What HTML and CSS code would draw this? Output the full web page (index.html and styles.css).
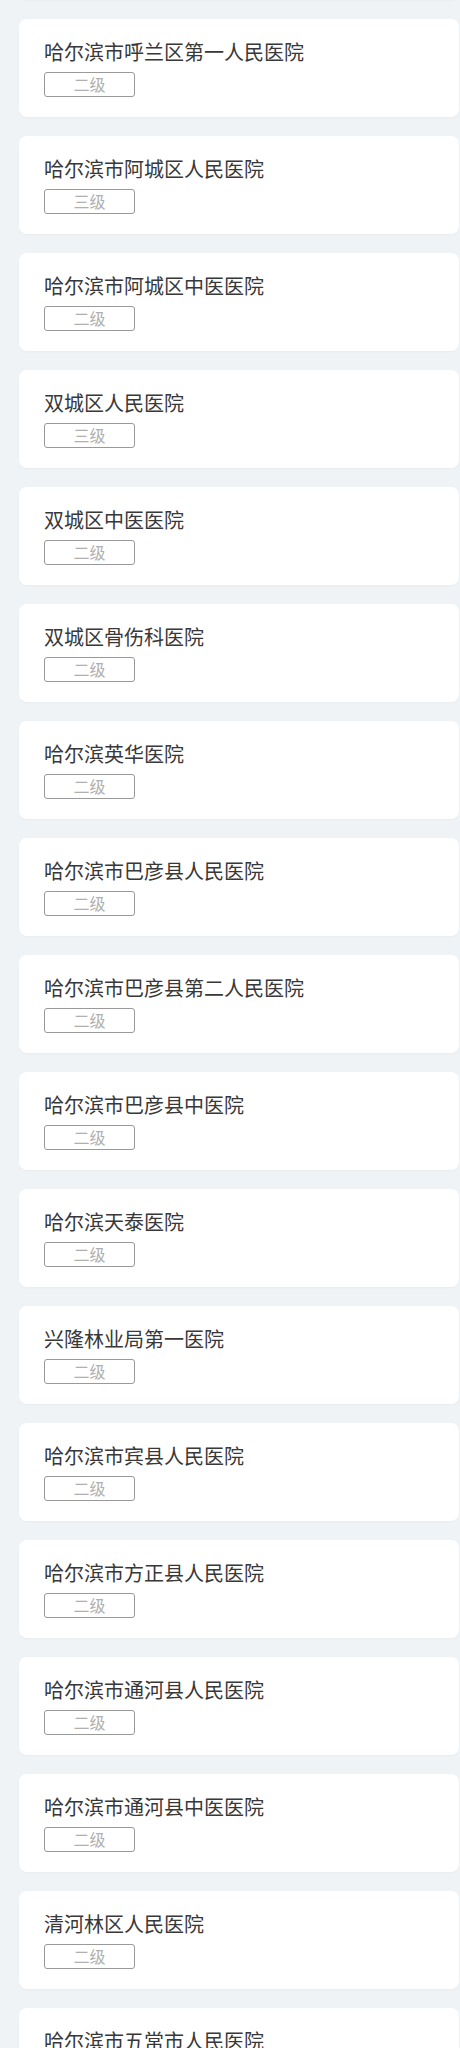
FILE: index.html
```html
<!DOCTYPE html>
<html lang="zh-CN">
<head>
<meta charset="utf-8">
<title>医院列表</title>
<link rel="stylesheet" href="styles.css">
</head>
<body>
<div class="list">
  <div class="card card-prev" aria-hidden="true"></div>
  <div class="card"><div class="name">哈尔滨市呼兰区第一人民医院</div><div class="level">二级</div></div>
  <div class="card"><div class="name">哈尔滨市阿城区人民医院</div><div class="level">三级</div></div>
  <div class="card"><div class="name">哈尔滨市阿城区中医医院</div><div class="level">二级</div></div>
  <div class="card"><div class="name">双城区人民医院</div><div class="level">三级</div></div>
  <div class="card"><div class="name">双城区中医医院</div><div class="level">二级</div></div>
  <div class="card"><div class="name">双城区骨伤科医院</div><div class="level">二级</div></div>
  <div class="card"><div class="name">哈尔滨英华医院</div><div class="level">二级</div></div>
  <div class="card"><div class="name">哈尔滨市巴彦县人民医院</div><div class="level">二级</div></div>
  <div class="card"><div class="name">哈尔滨市巴彦县第二人民医院</div><div class="level">二级</div></div>
  <div class="card"><div class="name">哈尔滨市巴彦县中医院</div><div class="level">二级</div></div>
  <div class="card"><div class="name">哈尔滨天泰医院</div><div class="level">二级</div></div>
  <div class="card"><div class="name">兴隆林业局第一医院</div><div class="level">二级</div></div>
  <div class="card"><div class="name">哈尔滨市宾县人民医院</div><div class="level">二级</div></div>
  <div class="card"><div class="name">哈尔滨市方正县人民医院</div><div class="level">二级</div></div>
  <div class="card"><div class="name">哈尔滨市通河县人民医院</div><div class="level">二级</div></div>
  <div class="card"><div class="name">哈尔滨市通河县中医医院</div><div class="level">二级</div></div>
  <div class="card"><div class="name">清河林区人民医院</div><div class="level">二级</div></div>
  <div class="card"><div class="name">哈尔滨市五常市人民医院</div><div class="level">二级</div></div>
</div>
</body>
</html>
```
FILE: styles.css
```css
html, body {
  margin: 0;
  padding: 0;
  background: #f0f3f6;
}
body {
  font-family: "Noto Sans CJK SC", "Noto Sans", sans-serif;
  overflow: hidden;
  height: 2048px;
}
.list {
  display: flex;
  flex-direction: column;
  gap: 19px;
  padding: 0 1px 0 19px;
}
.card {
  background: #ffffff;
  border-radius: 8px;
  padding: 20px 25px;
  height: 98px;
  box-sizing: border-box;
  box-shadow: 0 1px 2px rgba(0, 0, 0, 0.03);
}
.card-prev {
  margin-top: -98px;
}
.name {
  font-size: 20px;
  line-height: 26px;
  color: #383838;
  white-space: nowrap;
}
.level {
  margin-top: 7px;
  width: 91px;
  height: 25px;
  box-sizing: border-box;
  border: 1px solid #999999;
  border-radius: 3px;
  font-size: 16px;
  line-height: 23px;
  color: #b0b0b0;
  text-align: center;
}
```
